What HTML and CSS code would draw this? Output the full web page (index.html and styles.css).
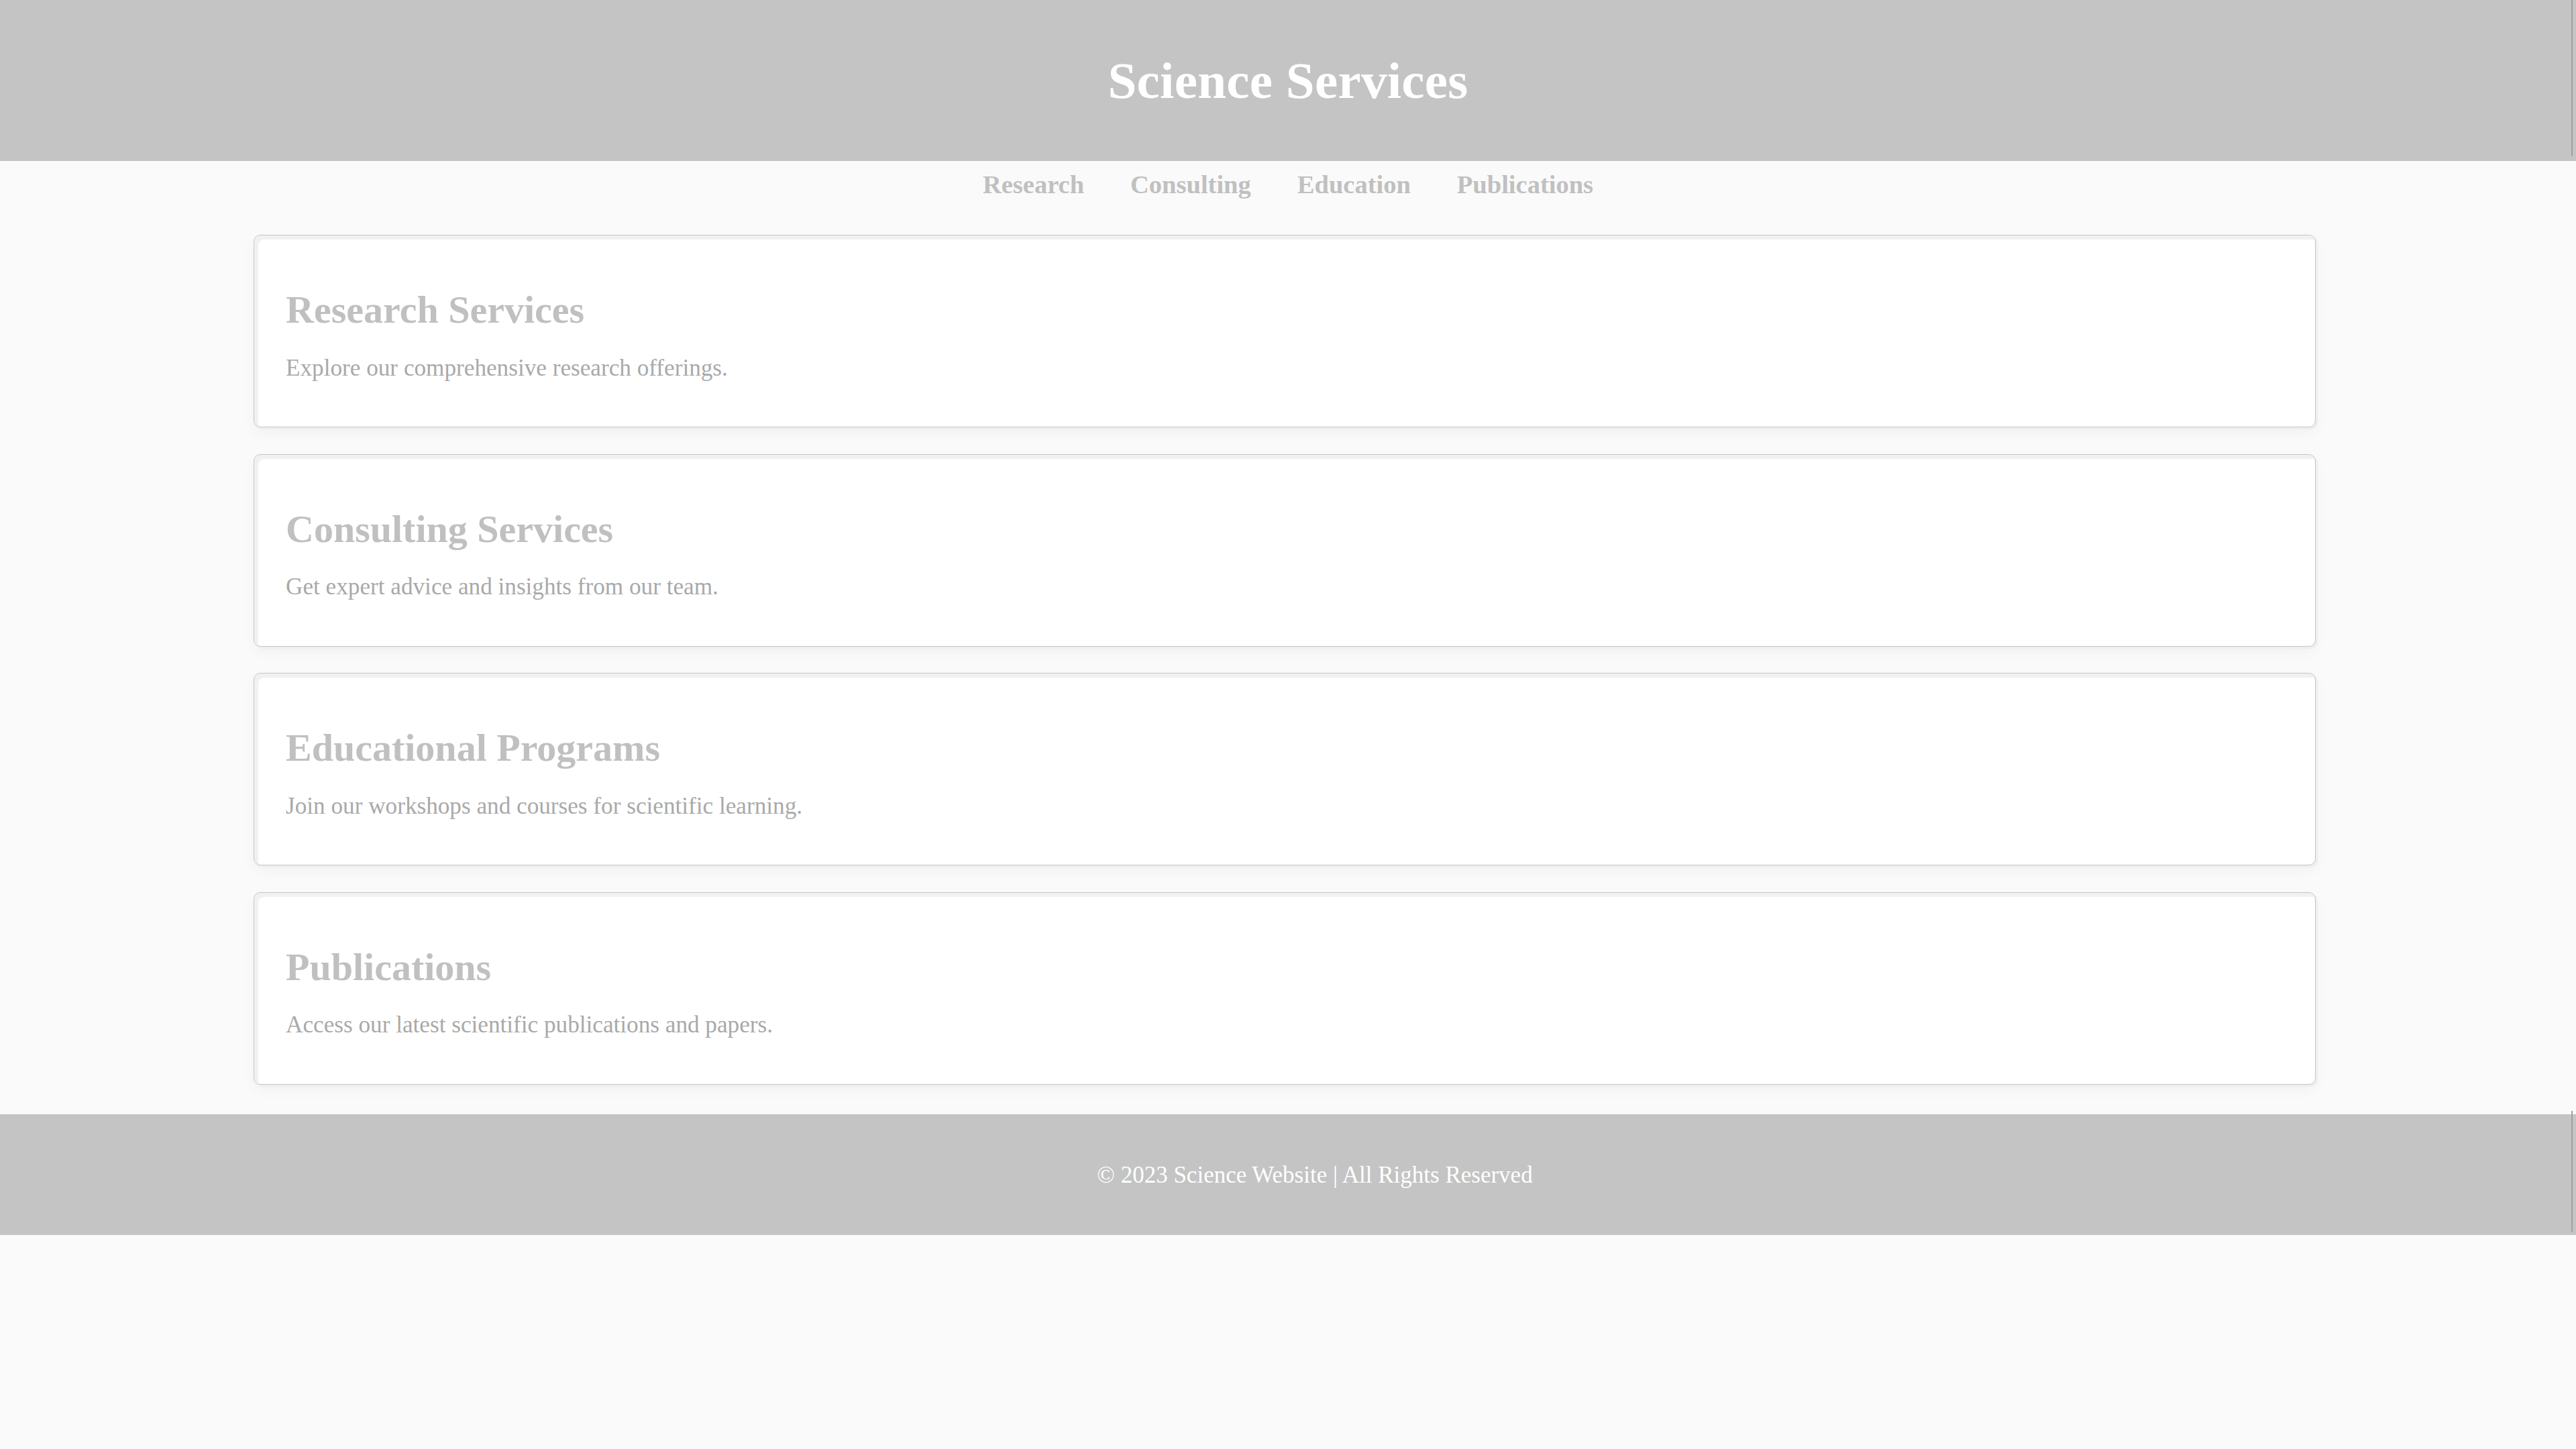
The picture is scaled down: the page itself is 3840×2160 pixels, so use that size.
FILE: index.html
```html
<!DOCTYPE html>
<html lang="en">
<head>
<meta charset="utf-8">
<title>Science Services</title>
<link rel="stylesheet" href="styles.css">
</head>
<body>
<header class="site-header">
  <h1 class="site-title">Science Services</h1>
</header>
<nav class="site-nav">
  <a class="nav-link" href="#research">Research</a>
  <a class="nav-link" href="#consulting">Consulting</a>
  <a class="nav-link" href="#education">Education</a>
  <a class="nav-link" href="#publications">Publications</a>
</nav>
<main class="services">
  <section class="card" id="research">
    <h2 class="card-title">Research Services</h2>
    <p class="card-text">Explore our comprehensive research offerings.</p>
  </section>
  <section class="card" id="consulting">
    <h2 class="card-title">Consulting Services</h2>
    <p class="card-text">Get expert advice and insights from our team.</p>
  </section>
  <section class="card" id="education">
    <h2 class="card-title">Educational Programs</h2>
    <p class="card-text">Join our workshops and courses for scientific learning.</p>
  </section>
  <section class="card" id="publications">
    <h2 class="card-title">Publications</h2>
    <p class="card-text">Access our latest scientific publications and papers.</p>
  </section>
</main>
<footer class="site-footer">
  <p class="footer-text">&copy; 2023 Science Website | All Rights Reserved</p>
</footer>
</body>
</html>
```

FILE: styles.css
```css
html, body {
  margin: 0;
  padding: 0;
}

body {
  background: #fafafa;
  font-family: "Liberation Serif", "Times New Roman", serif;
  min-height: 2160px;
}

.site-header {
  position: relative;
  height: 240px;
  background: #c4c4c4;
  display: flex;
  align-items: center;
  justify-content: center;
}

.site-header::after,
.site-footer::after {
  content: "";
  position: absolute;
  top: -5px;
  bottom: 5px;
  right: 5px;
  width: 2px;
  background: #a0a0a0;
}

.site-header::after {
  top: 0;
  bottom: 7px;
}

.site-title {
  margin: 0;
  font-size: 77px;
  line-height: 77px;
  font-weight: 700;
  color: #ffffff;
  letter-spacing: 0.3px;
}

.site-nav {
  box-sizing: border-box;
  height: 110px;
  padding-top: 16px;
  display: flex;
  justify-content: center;
  gap: 69px;
}

.nav-link {
  font-size: 38.5px;
  line-height: 38.5px;
  font-weight: 700;
  color: #c0c0c0;
  text-decoration: none;
}

.services {
  padding: 0 388px 44.5px 378px;
  display: flex;
  flex-direction: column;
  gap: 39.5px;
}

.card {
  box-sizing: border-box;
  height: 287px;
  padding: 82px 47px 0 47px;
  background: #ffffff;
  border: 1px solid #c6c6c6;
  border-radius: 10px;
  box-shadow:
    inset 6px 6px 0 #f1f1f1,
    3px 3px 0 #eeeeee,
    0 8px 20px rgba(0, 0, 0, 0.04);
}

.card-title {
  margin: 0;
  font-size: 58px;
  line-height: 57px;
  font-weight: 700;
  color: #c0c0c0;
}

.card-text {
  margin: 40.5px 0 0 0;
  font-size: 35.2px;
  line-height: 35px;
  color: #a9a9a9;
}

.site-footer {
  position: relative;
  height: 180px;
  background: #c4c4c4;
  display: flex;
  align-items: center;
  justify-content: center;
}

.footer-text {
  margin: 0;
  padding-left: 80px;
  font-size: 35px;
  line-height: 35px;
  color: #ffffff;
}
```
